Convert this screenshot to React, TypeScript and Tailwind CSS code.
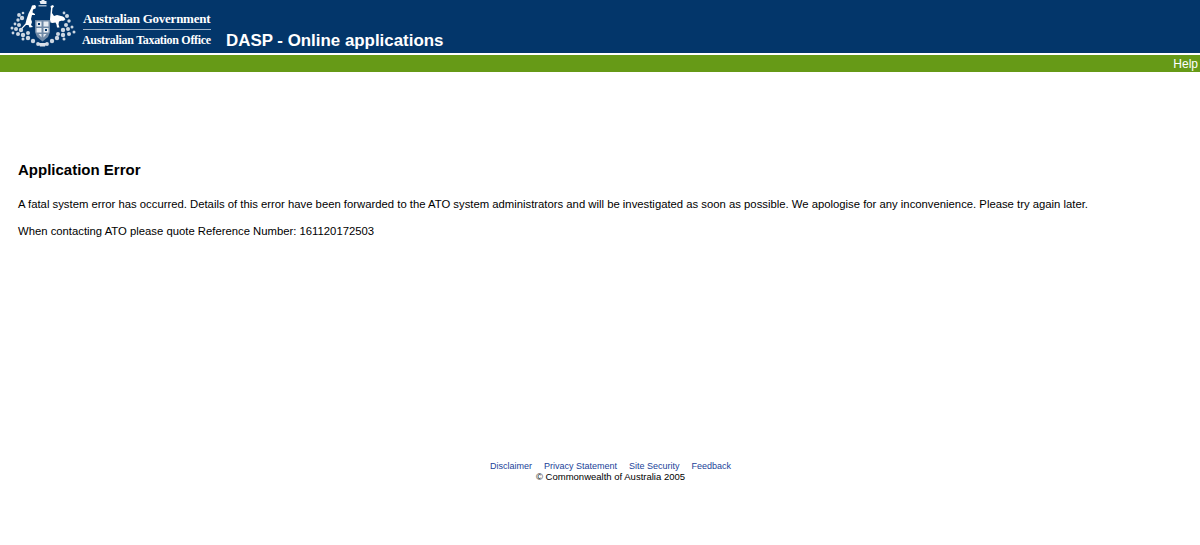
function Crest() {
  return (
    <svg width="68" height="50" viewBox="0 0 68 50" className="-mt-[2px] shrink-0 blur-[0.4px]">
      {/* wattle sprays */}
      <g fill="#cdd7e2">
        <circle cx="9" cy="15" r="1.900" /><circle cx="12" cy="18" r="2.200" /><circle cx="8" cy="20" r="1.700" />
        <circle cx="13" cy="13" r="1.300" /><circle cx="5" cy="24" r="1.400" /><circle cx="9" cy="25" r="2" />
        <circle cx="2" cy="28" r="1.500" /><circle cx="6" cy="29" r="2" /><circle cx="11" cy="30" r="2.200" />
        <circle cx="3" cy="33" r="1.400" /><circle cx="8" cy="34" r="2" /><circle cx="13" cy="35" r="2.200" />
        <circle cx="18" cy="33" r="2" /><circle cx="13" cy="39" r="1.500" /><circle cx="18" cy="38" r="2.200" />
        <circle cx="23" cy="41" r="2.200" /><circle cx="28" cy="44" r="1.900" />
        <circle cx="54" cy="13" r="1.400" /><circle cx="57" cy="16" r="2" /><circle cx="53" cy="19" r="1.900" />
        <circle cx="59" cy="21" r="1.700" /><circle cx="56" cy="25" r="2" /><circle cx="62" cy="27" r="1.500" />
        <circle cx="58" cy="29" r="2" /><circle cx="53" cy="30" r="2.200" /><circle cx="64" cy="32" r="1.500" />
        <circle cx="59" cy="34" r="2" /><circle cx="53" cy="35" r="2.200" /><circle cx="48" cy="34" r="2" />
        <circle cx="54" cy="39" r="1.500" /><circle cx="47" cy="38" r="2.200" /><circle cx="42" cy="41" r="2.200" />
        <circle cx="37" cy="44" r="1.900" />
      </g>
      {/* crown */}
      <path d="M29.500 1h1.500l1-1h2l1 1h1.500v3h-6z" fill="#e8edf3" />
      <rect x="28.500" y="5" width="8" height="1.500" fill="#9fb4ca" />
      {/* kangaroo */}
      <path fill="#fff" d="M25 5l1 1.500-.5 2-2.500 1-.5 3 2.500 1.500v1h-3l-1 4 1 3-1 3 2 2-3.500 .5-1-2.500-2.500 0-4 4-.5-1 4-4.500 1-4 2-6 2.500-5 1-3z" />
      {/* emu */}
      <path fill="#fff" d="M40.500 6l2.500-1 1 1.500-1.500 1.500-.5 5 2 3 3-1 6 1.500 2.500 3-3.500 1-3 1-.5 3 1 3h-2.500l-.5-3-1-2-3 .5-2-.5-.5-3 .5-6 .5-5z" />
      {/* shield */}
      <path fill="#6f89a6" d="M25 20h15v12l-2 5-5.500 4.500-5.500-4.500-2-5z" />
      <path fill="#e6ebf1" d="M26.500 21.500h5v5h-5zM33.500 21.500h5v5h-5zM26.500 28h5v4.500h-5zM33.500 28h5v4.500h-5zM28.500 34h3v3.500zM33.500 34h3l-3 3.500z" />
      <path fill="#03366a" d="M28 23h2v2h-2zM35 29h2v2h-2z" />
      {/* ground */}
      <path fill="#d8e0e9" d="M28 43h9l-2 3.500h-5z" />
    </svg>
  );
}

export default function App() {
  return (
    <div className="flex min-h-[545px] flex-col bg-white font-['Liberation_Sans',Arial,sans-serif] text-black">
      <header className="flex h-[53px] items-start bg-[#03366a] pl-[10px] pt-[2px] text-white">
        <Crest />
        <div className="ml-[5px] mt-[9px] w-[128px] font-['Liberation_Serif',serif] font-bold">
          <div className="text-[13px] leading-[15px] tracking-[-0.25px] whitespace-nowrap">Australian Government</div>
          <div className="mt-[3px] h-px w-[128px] bg-[#9fb4ca]" />
          <div className="mt-[3px] -ml-px text-[12px] leading-[14px] tracking-[-0.3px] whitespace-nowrap">Australian Taxation Office</div>
        </div>
        <div className="ml-[15px] mt-[29px] text-[16.900px] leading-[20px] font-bold whitespace-nowrap">DASP - Online applications</div>
      </header>
      <div className="h-[2px] bg-white" />
      <nav className="flex h-[17px] items-center justify-end bg-[#669a17] pr-[2px] text-[12px] text-white">Help</nav>

      <main className="pl-[18px] pt-[89px]">
        <h1 className="text-[15px] leading-[18px] font-bold">Application Error</h1>
        <p className="mt-[18px] text-[11.3px] leading-[14px] whitespace-nowrap">
          A fatal system error has occurred. Details of this error have been forwarded to the ATO system administrators and will be investigated as soon as possible. We apologise for any inconvenience. Please try again later.
        </p>
        <p className="mt-[13px] text-[11.3px] leading-[14px]">When contacting ATO please quote Reference Number: 161120172503</p>
      </main>

      <footer className="mt-[223px] flex flex-col items-center pl-[21px] leading-[10px]">
        <div className="flex gap-[12px] text-[9px] text-[#1a3f99]">
          <a>Disclaimer</a>
          <a>Privacy Statement</a>
          <a>Site Security</a>
          <a>Feedback</a>
        </div>
        <div className="mt-px text-[9.500px]">© Commonwealth of Australia 2005</div>
      </footer>
    </div>
  );
}
